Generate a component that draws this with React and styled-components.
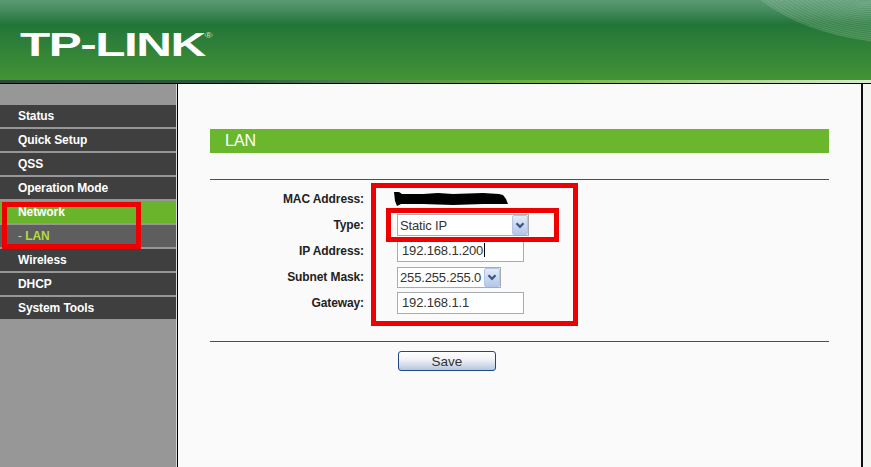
import React from 'react';
import styled, { createGlobalStyle } from 'styled-components';

const GlobalStyle = createGlobalStyle`
  html, body {
    margin: 0;
    padding: 0;
    background: #f4f6f2;
  }
  * {
    box-sizing: border-box;
  }
`;

const Page = styled.div`
  position: relative;
  width: 871px;
  height: 467px;
  overflow: hidden;
  font-family: "Liberation Sans", Arial, sans-serif;
  display: flex;
  flex-direction: column;
`;

const Banner = styled.header`
  position: relative;
  height: 80px;
  flex: none;
  padding: 31px 0 0 20px;
  overflow: hidden;
  background: linear-gradient(to bottom, #5a9a72 0px, #4a8f64 8px, #237538 24px, #2f8038 45px, #429335 80px);
`;

const Logo = styled.div`
  display: flex;
  align-items: flex-start;
  color: #fff;
  font-size: 33px;
  line-height: 28px;
  font-weight: 700;
  letter-spacing: -1px;
  transform: scaleX(1.5);
  transform-origin: left top;
  white-space: nowrap;
`;

const Registered = styled.span`
  font-size: 7px;
  line-height: 8px;
  letter-spacing: 0;
  margin: 1px 0 0 0;
  color: #cfe6cf;
  font-weight: 400;
`;

const Swoosh = styled.svg`
  position: absolute;
  top: 0;
  right: 0;
`;

const Strip = styled.div`
  height: 3px;
  flex: none;
  background: linear-gradient(to right, #2e4a3a 0, #2a5a3c 230px, #4a7a50 330px, #6db33f 540px, #a9cf8c 720px, #dcead0 871px);
`;

const Body = styled.div`
  flex: 1;
  display: flex;
  border-top: 1px solid #000;
`;

const Sidebar = styled.nav`
  width: 177px;
  flex: none;
  padding-top: 21px;
  display: flex;
  flex-direction: column;
  gap: 2px;
  border-right: 1px solid #d8d8d8;
  background: #979797;
`;

const MenuItem = styled.div`
  width: 176px;
  height: 22px;
  padding-left: 18px;
  font-size: 12px;
  line-height: 22px;
  font-weight: 700;
  letter-spacing: -0.08px;
  color: ${(p) => (p.$kind === 'sub' ? '#b5dc3c' : '#fff')};
  background: ${(p) =>
    p.$kind === 'active' ? '#6ab42c' : p.$kind === 'sub' ? '#5e5e5e' : '#3f3f3f'};
`;

const Dash = styled.span`
  font-weight: 400;
  color: #c9d6a0;
`;

const Content = styled.main`
  width: 686px;
  flex: none;
  padding: 45px 32px 0 32px;
  background: #fafafa;
  border-left: 1px solid #000;
  border-right: 2px solid #111;
`;

const TitleBar = styled.h1`
  margin: 0;
  height: 24px;
  padding-left: 15px;
  background: #6ab72e;
  color: #fff;
  font-size: 16px;
  line-height: 23px;
  font-weight: 400;
`;

const Rule = styled.hr`
  margin: ${(p) => p.$margin};
  height: 1px;
  border: 0;
  background: #1a6b45;
`;

const Form = styled.div`
  display: grid;
  grid-template-columns: 154px 1fr;
  column-gap: 33px;
  grid-auto-rows: 26px;
  align-items: center;
`;

const Label = styled.label`
  text-align: right;
  font-size: 12px;
  font-weight: 700;
  letter-spacing: -0.1px;
  color: #222;
`;

const Masked = styled.svg`
  display: block;
  margin: -1px 0 0 -4px;
`;

const TextField = styled.div`
  width: 127px;
  height: 22px;
  padding-left: 4px;
  border: 1px solid #a5acb2;
  background: #fff;
  color: #333;
  font-size: 13px;
  letter-spacing: -0.15px;
  line-height: 20px;
`;

const Caret = styled.span`
  display: inline-block;
  width: 1px;
  height: 14px;
  margin-left: 1px;
  vertical-align: -2px;
  background: #000;
`;

const Select = styled.div`
  width: ${(p) => p.$width}px;
  height: ${(p) => p.$height}px;
  padding-left: 2px;
  display: flex;
  align-items: center;
  justify-content: space-between;
  border: 1px solid #a5acb2;
  background: #fff;
  color: #333;
  font-size: 13px;
  letter-spacing: -0.15px;
`;

const SelectArrow = styled.span`
  width: 16px;
  height: 100%;
  flex: none;
  display: flex;
  align-items: center;
  justify-content: center;
  border: 1px solid #b4c6e4;
  border-radius: 2px;
  background: linear-gradient(to bottom, #e2eaf8, #b4c8ea);
`;

const Actions = styled.div`
  padding-left: 188px;
`;

const SaveButton = styled.button`
  display: block;
  width: 98px;
  height: 20px;
  padding: 0;
  border: 1px solid #1f4a84;
  border-radius: 3px;
  background: linear-gradient(to bottom, #fff 0, #eef1f6 45%, #b5c6df 100%);
  color: #333;
  font-family: inherit;
  font-size: 13.5px;
  line-height: 17px;
`;

const Gutter = styled.div`
  flex: 1;
  background: #f4f6f2;
`;

// the red annotation boxes drawn over the screenshot
const Highlight = styled.div`
  position: absolute;
  left: ${(p) => p.$x}px;
  top: ${(p) => p.$y}px;
  width: ${(p) => p.$w}px;
  height: ${(p) => p.$h}px;
  border: ${(p) => p.$t}px solid #ee0000;
`;

const Chevron = () => (
  <svg width="10" height="7" viewBox="0 0 10 7">
    <path d="M1.5 1.2 L5 4.8 L8.5 1.2" fill="none" stroke="#3d5680" strokeWidth="2.2" />
  </svg>
);

const menu = [
  ['Status'],
  ['Quick Setup'],
  ['QSS'],
  ['Operation Mode'],
  ['Network', 'active'],
  ['LAN', 'sub'],
  ['Wireless'],
  ['DHCP'],
  ['System Tools'],
];

export default function App() {
  return (
    <Page>
      <GlobalStyle />
      <Banner>
        <Logo>
          TP-LINK<Registered>®</Registered>
        </Logo>
        <Swoosh width="110" height="44" viewBox="0 0 110 44">
          <path d="M0 0 Q 42 32 110 41 L110 0 Z" fill="#fff" fillOpacity="0.1" />
          {Array.from({ length: 20 }, (_, i) => (
            <path
              key={i}
              d={`M${i * 5} 0 Q ${42 + i * 3} ${32 - i * 1.4} 110 ${41 - i * 2.1}`}
              fill="none"
              stroke="#b5dcc0"
              strokeOpacity="0.28"
              strokeWidth="0.7"
            />
          ))}
        </Swoosh>
      </Banner>
      <Strip />
      <Body>
        <Sidebar>
          {menu.map(([name, kind]) => (
            <MenuItem key={name} $kind={kind}>
              {kind === 'sub' && <Dash>- </Dash>}
              {name}
            </MenuItem>
          ))}
        </Sidebar>
        <Content>
          <TitleBar>LAN</TitleBar>
          <Rule $margin="26px 0 6px" />
          <Form>
            <Label>MAC Address:</Label>
            <Masked width="116" height="14" viewBox="0 0 116 14">
              <path
                d="M1 0 L6 0 L9 2 L30 2 L45 1 L60 2 L90 1 L106 2 L110 3 L113 7 L115 12 L108 12 L90 12 L60 13 L30 12 L8 12 L4 14 L2 9 Z"
                fill="#000"
              />
            </Masked>
            <Label>Type:</Label>
            <Select $width={132} $height={22}>
              Static IP
              <SelectArrow>
                <Chevron />
              </SelectArrow>
            </Select>
            <Label>IP Address:</Label>
            <TextField>
              192.168.1.200
              <Caret />
            </TextField>
            <Label>Subnet Mask:</Label>
            <Select $width={104} $height={21}>
              255.255.255.0
              <SelectArrow>
                <Chevron />
              </SelectArrow>
            </Select>
            <Label>Gateway:</Label>
            <TextField>192.168.1.1</TextField>
          </Form>
          <Rule $margin="25px 0 9px" />
          <Actions>
            <SaveButton>Save</SaveButton>
          </Actions>
        </Content>
        <Gutter />
      </Body>
      <Highlight $x={2} $y={202} $w={139} $h={47} $t={5} />
      <Highlight $x={371} $y={183} $w={207} $h={143} $t={5} />
      <Highlight $x={386} $y={208} $w={173} $h={34} $t={5} />
    </Page>
  );
}
